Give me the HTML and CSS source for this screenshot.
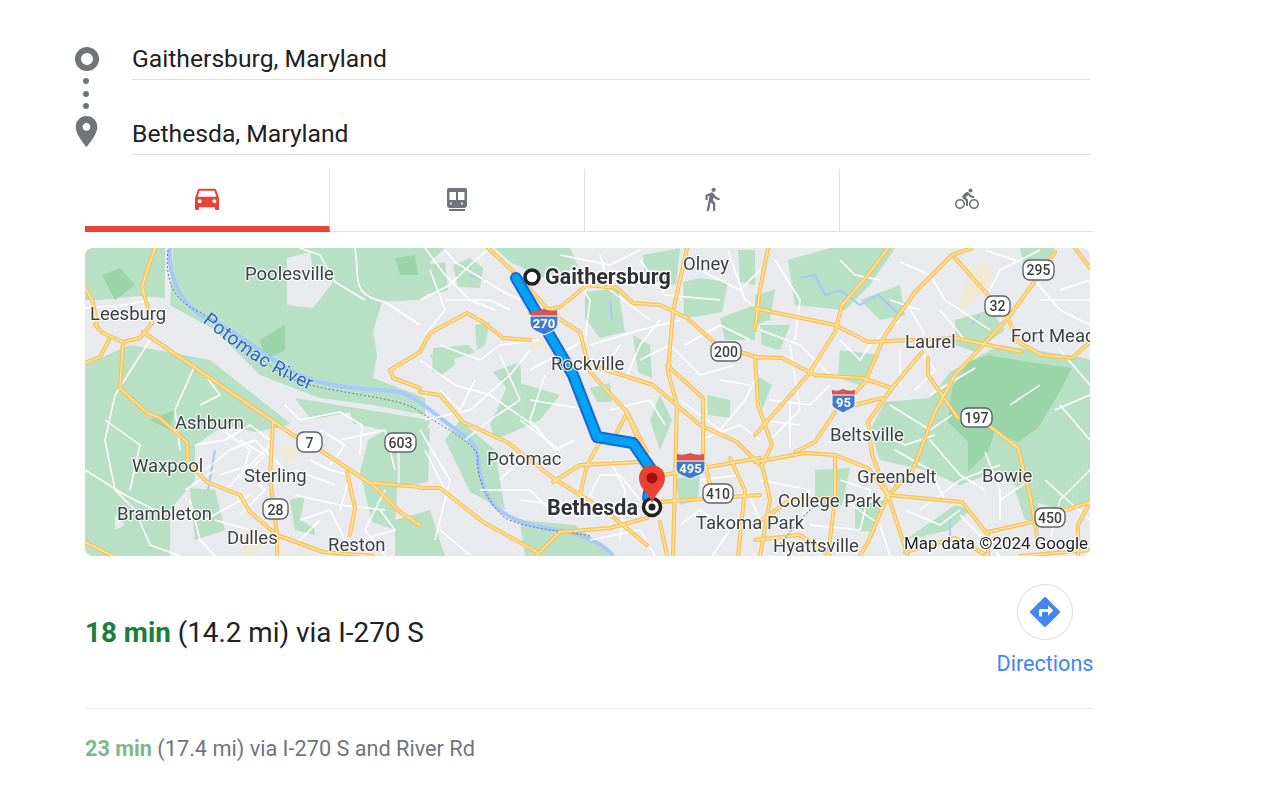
FILE: index.html
```html
<!DOCTYPE html>
<html lang="en">
<head>
<meta charset="utf-8">
<title>Directions</title>
<link rel="stylesheet" href="styles.css">
</head>
<body>
<main class="panel">
  <section class="trip">
    <div class="trip-icons">
      <span class="origin"></span>
      <span class="dots"><i></i><i></i><i></i></span>
      <svg class="dest" viewBox="0 0 24 24"><path d="M12 2C8.13 2 5 5.13 5 9c0 5.25 7 13 7 13s7-7.75 7-13c0-3.87-3.13-7-7-7zm0 9.5c-1.38 0-2.5-1.12-2.5-2.5s1.12-2.5 2.5-2.5 2.5 1.12 2.5 2.5-1.12 2.5-2.5 2.5z"/></svg>
    </div>
    <div class="fields">
      <div class="field">Gaithersburg, Maryland</div>
      <div class="field">Bethesda, Maryland</div>
    </div>
  </section>

  <nav class="tabs">
    <div class="tab tab-active"><svg class="ic-car" viewBox="0 0 24 24"><path d="M18.92 6.01C18.72 5.42 18.16 5 17.5 5h-11c-.66 0-1.21.42-1.42 1.01L3 12v8c0 .55.45 1 1 1h1c.55 0 1-.45 1-1v-1h12v1c0 .55.45 1 1 1h1c.55 0 1-.45 1-1v-8l-2.08-5.99zM6.5 16c-.83 0-1.5-.67-1.5-1.5S5.67 13 6.5 13s1.5.67 1.5 1.5S7.33 16 6.5 16zm11 0c-.83 0-1.5-.67-1.5-1.5s.67-1.5 1.5-1.5 1.5.67 1.5 1.5-.67 1.5-1.5 1.5zM5 11l1.5-4.5h11L19 11H5z"/></svg></div>
    <div class="tab"><svg class="ic-train" viewBox="0 0 20 23"><path fill-rule="evenodd" d="M2 0H18A2 2 0 0 1 20 2V17A3 3 0 0 1 17 20H3A3 3 0 0 1 0 17V2A2 2 0 0 1 2 0ZM2.5 4V12H9V4ZM11 4V12H17.5V4ZM4.5 14A1.5 1.5 0 1 0 4.501 17ZM15.5 14A1.5 1.5 0 1 0 15.501 17ZM2 21H18V23H2Z"/></svg></div>
    <div class="tab"><svg class="ic-walk" viewBox="0 0 24 24"><path d="M13.5 5.5c1.1 0 2-.9 2-2s-.9-2-2-2-2 .9-2 2 .9 2 2 2zM9.8 8.9L7 23h2.1l1.8-8 2.1 2v6h2v-7.5l-2.1-2 .6-3C14.8 12 16.8 13 19 13v-2c-1.9 0-3.5-1-4.3-2.4l-1-1.6c-.4-.6-1-1-1.7-1-.3 0-.5.1-.8.1L6 8.3V13h2V9.6l1.8-.7"/></svg></div>
    <div class="tab"><svg class="ic-bike" viewBox="0 0 24 24"><path d="M15.5 5.5c1.1 0 2-.9 2-2s-.9-2-2-2-2 .9-2 2 .9 2 2 2zM5 12c-2.8 0-5 2.2-5 5s2.2 5 5 5 5-2.2 5-5-2.2-5-5-5zm0 8.5c-1.9 0-3.5-1.6-3.5-3.5s1.6-3.5 3.5-3.5 3.5 1.6 3.5 3.5-1.6 3.5-3.5 3.5zm5.8-10l2.4-2.4.8.8c1.3 1.3 3 2.1 5.1 2.1V9c-1.5 0-2.7-.6-3.6-1.5l-1.9-1.9c-.5-.4-1-.6-1.6-.6s-1.1.2-1.4.6L7.8 8.4c-.4.4-.6.9-.6 1.4 0 .6.2 1.1.6 1.4L11 14v5h2v-6.2l-2.2-2.3zM19 12c-2.8 0-5 2.2-5 5s2.2 5 5 5 5-2.2 5-5-2.2-5-5-5zm0 8.5c-1.9 0-3.5-1.6-3.5-3.5s1.6-3.5 3.5-3.5 3.5 1.6 3.5 3.5-1.6 3.5-3.5 3.5z"/></svg></div>
  </nav>

  <svg class="map" viewBox="85 248 1005 308" role="img" aria-label="Map from Gaithersburg to Bethesda">
    <defs>
      <g id="highways">
        <path d="M155,248L148,268L142,287L148,308L152,323"/>
        <path d="M95,325L103,333L123,342L140,338L152,323"/>
        <path d="M85,287L93,302L97,325"/>
        <path d="M85,363L100,357L110,338"/>
        <path d="M143,332L293,435L323,452L373,485L400,512L420,525"/>
        <path d="M123,343L120,388L147,413L160,418L187,442L188,462L207,482L240,495L250,512L277,535L323,552L373,556"/>
        <path d="M273,422L270,478L277,535L277,556"/>
        <path d="M347,472L355,508L350,535"/>
        <path d="M373,483L420,487"/>
        <path d="M85,542L113,556"/>
        <path d="M420,352L390,370L393,378L420,388"/>
        <path d="M488,248L517,275L553,315L580,332L590,372L627,412L647,452"/>
        <path d="M530,313L560,307L587,285L617,288L633,303L660,305L687,318L717,345L760,358"/>
        <path d="M420,352L430,333L467,313L483,322L503,338L530,340"/>
        <path d="M687,248L673,312L668,372L677,405L673,556"/>
        <path d="M420,392L440,395L463,422L507,442L553,478L607,512L647,545"/>
        <path d="M600,368L653,385L700,425L737,442L760,465"/>
        <path d="M667,365L703,398L703,458L713,495"/>
        <path d="M553,482L580,465L640,462"/>
        <path d="M580,495L587,465L600,442"/>
        <path d="M617,432L627,413L640,445"/>
        <path d="M663,475L760,458"/>
        <path d="M420,488L440,488L483,522L537,552"/>
        <path d="M537,555L560,532L610,528L647,518"/>
        <path d="M660,502L760,495"/>
        <path d="M660,522L667,556"/>
        <path d="M888,248L868,275L842,305L835,332L808,375L755,435"/>
        <path d="M972,248L952,255L915,292L885,335L865,382L855,393"/>
        <path d="M955,258L988,295L1008,318"/>
        <path d="M1055,252L1032,285L1008,318L955,375L935,412L912,472L888,495L868,542L860,556"/>
        <path d="M1008,318L1018,342L1042,355L1072,358L1090,342"/>
        <path d="M755,308L772,312L835,325L868,342L955,338L1022,352"/>
        <path d="M755,357L782,358L815,375L862,378L892,388"/>
        <path d="M922,352L892,388L868,422L872,455L888,495"/>
        <path d="M835,412L815,442L795,452"/>
        <path d="M855,405L882,398"/>
        <path d="M755,462L805,453L835,455L868,468L888,495L902,538L908,556"/>
        <path d="M835,455L835,498L828,556"/>
        <path d="M888,495L962,502L988,535L988,556"/>
        <path d="M988,532L1032,522L1090,502"/>
        <path d="M988,425L1018,448L1030,495L1038,542"/>
        <path d="M928,358L928,375L942,395L958,418"/>
        <path d="M1075,248L1090,268"/>
        <path d="M755,525L790,500L835,498"/>
        <path d="M755,540L800,535L830,556"/>
        <path d="M905,552L955,538L988,556"/>
        <path d="M1078,556L1078,525L1090,502"/>
        <path d="M1020,556L1090,550"/>
        <path d="M768,248L760,290L755,330"/>
        <path d="M762,465L770,500L760,556"/>
        <path d="M730,458L745,490L738,556"/>
        <path d="M755,357L758,405L772,445L762,465"/>
        <path d="M640,462L648,475"/>
      </g>
    </defs>

    <rect class="m-land" x="85" y="248" width="1005" height="308"/>

    <g class="m-green">
      <path d="M173,248H445L430,262L440,285L420,300L382,302L373,332L377,355L373,378L425,398V415L373,405L320,398L260,375L215,330L170,305Z"/>
      <path d="M85,248H165V298L140,296L100,300L85,300Z"/>
      <path d="M85,365L130,345L210,360L292,425L255,432L225,425L195,445L195,480L170,510L170,556H85Z"/>
      <path d="M295,398L430,420L425,440L340,420L310,418Z"/>
      <path d="M368,440L395,425L398,470L395,530L372,522L360,472Z"/>
      <path d="M415,430L430,428L428,482L400,486L400,440Z"/>
      <path d="M395,520L430,510L445,556H395Z"/>
      <path d="M290,500L310,495L315,535L295,530Z"/>
      <path d="M190,488L215,490L225,530L195,540Z"/>
      <path d="M453,265L470,258L483,268L480,288L458,287Z"/>
      <path d="M430,355L453,350L455,365L440,376Z"/>
      <path d="M433,348L468,345L475,352L452,360L444,372L432,372Z"/>
      <path d="M475,325L490,322L485,345L477,350Z"/>
      <path d="M493,372L520,362L522,395L510,392Z"/>
      <path d="M590,388L610,383L612,402L597,402Z"/>
      <path d="M683,282L700,278L728,282L722,312L700,316L684,318Z"/>
      <path d="M585,292L618,288L625,332L600,338L585,318Z"/>
      <path d="M720,318L755,305L755,340L725,340Z"/>
      <path d="M707,395L730,400L730,418L708,415Z"/>
      <path d="M495,248L570,248L585,282L560,285L510,262Z"/>
      <path d="M425,265L445,262L448,290L430,295Z"/>
      <path d="M510,380L560,395L540,420L495,440L490,425Z"/>
      <path d="M633,335L650,345L652,378L638,372Z"/>
      <path d="M643,255L680,248L676,285L645,280Z"/>
      <path d="M738,250L755,250L755,285L740,282Z"/>
      <path d="M760,325L790,325L780,350L762,345Z"/>
      <path d="M460,420L495,450L505,510L470,492L445,440Z"/>
      <path d="M520,520L575,525L610,552V556H525Z"/>
      <path d="M788,260L830,248H895L870,285L845,310L795,305Z"/>
      <path d="M755,295L775,290L770,320L755,325Z"/>
      <path d="M860,300L900,285L905,315L880,320Z"/>
      <path d="M1085,358L1090,360V500L1060,510L1030,500L1000,470L960,485L925,470L880,460L870,430L885,402L930,398L950,372L1000,345Z"/>
      <path d="M1020,248H1055L1040,270L1025,270Z"/>
      <path d="M955,320L990,310L1005,330L975,352L955,345Z"/>
      <path d="M815,470L850,468L842,505L815,508Z"/>
      <path d="M855,505L885,500L870,532L855,530Z"/>
      <path d="M905,540L955,505L970,510L950,530Z"/>
      <path d="M1015,490L1035,485L1040,520L1025,520Z"/>
      <path d="M660,395L672,420L660,450L650,420Z"/>
      <path d="M675,480L700,470L698,500L680,505Z"/>
      <path d="M840,350L880,355L860,385L838,378Z"/>
      <path d="M755,375L772,385L762,410Z"/>
    </g>
    <g class="m-forest">
      <path d="M952,388L968,362L988,355L1028,362L1072,368L1058,395L1038,428L1018,442L995,432L988,452L968,472L968,442L948,422Z"/>
      <path d="M102,275L120,268L135,285L115,300Z"/>
      <path d="M260,340L285,325L285,350L265,360Z"/>
      <path d="M395,258L415,255L418,275L400,275Z"/>
      <path d="M150,420L175,410L170,430Z"/>
    </g>

    <g class="m-land-patch">
      <path d="M287,258L310,252L313,268L333,282L313,308L287,305Z"/>
      <path d="M382,302L420,300V355L380,340Z"/>
      <path d="M120,300L170,305L180,325L150,340L100,330Z"/>
      <path d="M205,445L232,428L290,440L270,520L230,500L205,470Z"/>
      <path d="M285,425L350,412L360,450L310,470Z"/>
      <path d="M310,470L360,480L345,545L300,520Z"/>
      <path d="M115,515L125,525L115,530Z"/>
    </g>

    <g class="m-sand">
      <path d="M280,448L292,445L296,458L285,464Z"/>
      <path d="M240,532L258,528L262,550L245,556Z"/>
      <path d="M970,270L985,262L995,272L975,300L958,312Z"/>
      <path d="M528,340L540,335L545,345L532,350Z"/>
    </g>

    <g class="m-water">
      <path d="M170,248C168,270 175,300 205,318C240,330 265,360 300,375C340,392 380,388 400,392C420,398 440,420 470,440C482,452 475,475 490,500C505,522 540,528 570,532C590,538 605,545 613,556"/>
    </g>
    <g class="m-water-thin">
      <path d="M800,278L815,275L825,295L840,290L860,305L878,295L900,315"/>
      <path d="M215,450L208,490"/>
      <path d="M980,315L972,325"/>
      <path d="M950,520V540"/>
      <path d="M610,300L612,320"/>
      <path d="M470,275L485,280"/>
    </g>
    <path class="m-border" d="M168,250C165,275 170,300 200,312C240,335 262,368 300,382C340,395 400,396 420,412C440,425 470,440 478,455C475,480 490,505 505,518C530,530 560,530 590,536"/>

    <g class="m-white">
      <path d="M355,248C360,280 350,295 385,302L420,325"/>
      <path d="M300,248L320,255L335,282L365,300"/>
      <path d="M85,308L125,305L150,300"/>
      <path d="M150,340L115,395L105,440L115,490L135,510L150,545L180,556"/>
      <path d="M195,365L175,410L180,450"/>
      <path d="M85,470L125,495L155,510L205,520L250,495"/>
      <path d="M205,470L230,450L255,440L285,470"/>
      <path d="M195,445L225,440L250,425L270,440"/>
      <path d="M200,405L220,395L205,375"/>
      <path d="M190,500L200,540L215,556"/>
      <path d="M285,405L300,420L340,412L362,425L360,455"/>
      <path d="M310,460L330,470L350,475L340,510"/>
      <path d="M295,495L340,505L385,510"/>
      <path d="M220,475L250,465L270,445"/>
      <path d="M300,520L330,510L345,540"/>
      <path d="M215,425L250,450L240,480"/>
      <path d="M380,510L395,530L360,540"/>
      <path d="M420,300L450,285L470,265L490,248"/>
      <path d="M425,248L445,275L470,300L495,310"/>
      <path d="M420,430L450,480L435,540"/>
      <path d="M500,355L520,400L490,420L465,440"/>
      <path d="M420,360L455,385L490,395L540,430"/>
      <path d="M570,270L590,300L585,340L530,370"/>
      <path d="M590,345L640,330L680,320"/>
      <path d="M520,420L560,450"/>
      <path d="M625,380L640,345L660,320"/>
      <path d="M680,400L720,430L745,400L760,370"/>
      <path d="M728,250L745,300L760,310"/>
      <path d="M700,270L740,290L760,270"/>
      <path d="M480,490L530,490L560,520"/>
      <path d="M610,460L625,490L620,540"/>
      <path d="M700,480L740,475L760,520"/>
      <path d="M775,260L800,300L795,340"/>
      <path d="M790,345L800,410L770,440"/>
      <path d="M840,340L860,360L870,345L900,320"/>
      <path d="M905,300L925,335"/>
      <path d="M930,395L975,368"/>
      <path d="M890,405L930,430L952,415"/>
      <path d="M930,440L960,475L985,490"/>
      <path d="M900,350L900,385"/>
      <path d="M985,452L1000,490L1000,520"/>
      <path d="M920,510L960,480L1000,465"/>
      <path d="M1060,405L1090,440"/>
      <path d="M1030,275L1060,310L1090,325"/>
      <path d="M1060,350L1090,385"/>
      <path d="M1050,540L1060,500L1090,470"/>
      <path d="M790,400L790,448"/>
      <path d="M760,480L810,490L800,530"/>
      <path d="M845,500L880,525L890,556"/>
      <path d="M430,270L445,310L425,335"/>
      <path d="M445,250L455,262L500,290L520,300"/>
      <path d="M440,345L480,360L500,345L540,340"/>
      <path d="M425,420L470,410L510,375L530,350"/>
      <path d="M445,300L490,300L510,310"/>
      <path d="M475,380L460,410L440,390"/>
      <path d="M545,375L530,420L555,450L575,440"/>
      <path d="M530,400L590,410"/>
      <path d="M560,255L610,265L640,250"/>
      <path d="M600,255L610,290L650,320"/>
      <path d="M640,260L665,295L720,300"/>
      <path d="M620,345L600,375"/>
      <path d="M640,360L670,345L700,375L735,365"/>
      <path d="M610,410L650,400L665,425"/>
      <path d="M500,480L520,460L555,465"/>
      <path d="M520,500L560,505"/>
      <path d="M440,530L470,555"/>
      <path d="M425,450L445,490"/>
      <path d="M585,505L600,475L620,475L640,500"/>
      <path d="M590,540L640,530L655,556"/>
      <path d="M680,525L700,510L730,530L712,556"/>
      <path d="M700,440L740,425L760,440"/>
      <path d="M720,380L750,385"/>
      <path d="M685,345L720,325L750,340"/>
      <path d="M760,330L800,345L830,375"/>
      <path d="M770,400L810,405L830,385"/>
      <path d="M840,260L855,275L880,280"/>
      <path d="M900,262L930,275L945,300L990,330"/>
      <path d="M890,300L920,310"/>
      <path d="M940,310L965,340"/>
      <path d="M985,250L1020,262"/>
      <path d="M1060,290L1090,280"/>
      <path d="M860,425L905,445L935,435"/>
      <path d="M895,450L930,470L945,500"/>
      <path d="M840,480L870,490L860,530"/>
      <path d="M905,510L940,525L960,510"/>
      <path d="M1000,500L1030,480"/>
      <path d="M1010,405L1040,385"/>
      <path d="M760,420L800,425"/>
      <path d="M915,390L935,370L920,350"/>
      <path d="M985,300L1000,270L1040,250"/>
      <path d="M1040,300L1090,300"/>
      <path d="M1055,410L1090,395"/>
      <path d="M1045,480L1090,520"/>
      <path d="M960,515L1000,556"/>
      <path d="M810,525L860,530"/>
      <path d="M340,440L385,430L395,470"/>
      <path d="M385,490L365,530L385,556"/>
      <path d="M295,470L335,485"/>
      <path d="M225,490L245,470L265,490L240,515"/>
      <path d="M185,490L215,470"/>
      <path d="M240,440L265,455L245,475"/>
      <path d="M215,520L250,530"/>
      <path d="M295,545L320,520"/>
      <path d="M320,430L345,445L330,465"/>
      <path d="M105,420L140,445L130,490"/>
    </g>

    <use href="#highways" class="m-road-out"/>
    <use href="#highways" class="m-road-in"/>

    <g class="m-dotted"><path d="M775,550L800,520L815,505"/></g>

    <path class="m-route-out" d="M516,278L573,375L597,437L633,443L653,472L648,498"/>
    <path class="m-route-in" d="M516,278L573,375L597,437L633,443L653,472L648,498"/>

    <g class="m-shield">
      <g>
        <path class="s-red" d="M531,310Q537,312 544,309Q551,312 557,310V316H531Z"/>
        <path class="s-blue" d="M530,316H558V323C558,330 550,332 544,335C538,332 530,330 530,323Z"/>
        <text class="s-num" x="544" y="328">270</text>
      </g>
      <g>
        <path class="s-red" d="M677,454Q684,456 690,453Q697,456 704,454V461H677Z"/>
        <path class="s-blue" d="M676,461H705V468C705,475 696,476 690,479C684,476 676,475 676,468Z"/>
        <text class="s-num" x="690.5" y="473">495</text>
      </g>
      <g>
        <path class="s-red" d="M832,390Q838,392 843,389Q849,392 855,390V395H832Z"/>
        <path class="s-blue" d="M832,395H855V405C855,408 848,410 843,413C838,410 832,408 832,405Z"/>
        <text class="s-num" x="843.5" y="407">95</text>
      </g>
    </g>

    <g class="m-round">
      <rect x="297" y="432" width="25" height="20" rx="7"/><text x="309.5" y="447.5">7</text>
      <rect x="385" y="433" width="31" height="19" rx="7"/><text x="400.5" y="447.5">603</text>
      <rect x="263" y="499" width="25" height="20" rx="7"/><text x="275.5" y="514.5">28</text>
      <rect x="711" y="342" width="30" height="19" rx="7"/><text x="726" y="356.5">200</text>
      <rect x="703" y="484" width="30" height="19" rx="7"/><text x="718" y="498.5">410</text>
      <rect x="1023" y="260" width="31" height="20" rx="7"/><text x="1038.5" y="275">295</text>
      <rect x="985" y="296" width="25" height="20" rx="7"/><text x="997.5" y="311">32</text>
      <rect x="961" y="408" width="31" height="19" rx="7"/><text x="976.5" y="422.5">197</text>
      <rect x="1035" y="508" width="30" height="19" rx="7"/><text x="1050" y="522.5">450</text>
    </g>

    <g class="m-label">
      <text x="245" y="280">Poolesville</text>
      <text x="90" y="320">Leesburg</text>
      <text x="175" y="429">Ashburn</text>
      <text x="132" y="472">Waxpool</text>
      <text x="244" y="482">Sterling</text>
      <text x="117" y="520">Brambleton</text>
      <text x="227" y="544">Dulles</text>
      <text x="328" y="551">Reston</text>
      <text x="683" y="270">Olney</text>
      <text x="551" y="370">Rockville</text>
      <text x="487" y="465">Potomac</text>
      <text x="696" y="529">Takoma Park</text>
      <text x="773" y="552">Hyattsville</text>
      <text x="778" y="507">College Park</text>
      <text x="857" y="483">Greenbelt</text>
      <text x="982" y="482">Bowie</text>
      <text x="830" y="441">Beltsville</text>
      <text x="905" y="348">Laurel</text>
      <text x="1011" y="342">Fort Meade</text>
    </g>
    <g class="m-label-bold">
      <text x="545" y="284">Gaithersburg</text>
      <text x="547" y="515">Bethesda</text>
    </g>
    <path id="river-line" class="m-none" d="M202,322C232,345 262,372 320,394"/>
    <text class="m-river"><textPath href="#river-line">Potomac River</textPath></text>
    <text class="m-credit" x="904" y="549">Map data ©2024 Google</text>

    <circle class="m-start" cx="532" cy="277" r="7"/>
    <circle class="m-end" cx="652" cy="507" r="8.5"/>
    <circle class="m-end-dot" cx="652" cy="507" r="3.5"/>
    <path class="m-pin" d="M652,503C648,492 639,488 639,478A13,13 0 0 1 665,478C665,488 656,492 652,503Z"/>
    <circle class="m-pin-dot" cx="652" cy="478" r="5.5"/>
  </svg>

  <section class="route">
    <p class="route-main"><strong>18 min</strong> (14.2 mi) via I-270 S</p>
    <div class="directions">
      <span class="dir-circle"><svg viewBox="0 0 24 24"><path d="M21.71 11.29l-9-9c-.39-.39-1.02-.39-1.41 0l-9 9c-.39.39-.39 1.02 0 1.41l9 9c.39.39 1.02.39 1.41 0l9-9c.39-.38.39-1.01 0-1.41zM14 14.5V12h-4v3H8v-4c0-.55.45-1 1-1h5V7.5l3.5 3.5-3.5 3.5z"/></svg></span>
      <span class="dir-label">Directions</span>
    </div>
  </section>

  <p class="route-alt"><strong>23 min</strong> (17.4 mi) via I-270 S and River Rd</p>
</main>
</body>
</html>
```
FILE: styles.css
```css
html, body { margin: 0; padding: 0; background: #fff; }
body { font-family: Roboto, "Liberation Sans", sans-serif; overflow: hidden; height: 787px; }
.panel { width: 1008px; margin-left: 85px; padding-top: 41px; }

.trip { display: flex; margin-left: -10px; width: 1015px; }
.trip-icons { width: 24px; margin-right: 33px; padding-top: 6px; display: flex; flex-direction: column; align-items: center; }
.origin { box-sizing: border-box; width: 24px; height: 24px; border: 6px solid #70757a; border-radius: 50%; }
.dots { display: flex; flex-direction: column; gap: 6.5px; margin: 7px 2px 0 0; }
.dots i { display: block; width: 6px; height: 6px; border-radius: 50%; background: #70757a; }
.dest { width: 37px; height: 37px; margin: 4px 1px 0 0; fill: #70757a; }
.fields { flex: 1; display: flex; flex-direction: column; gap: 36px; }
.field { height: 38px; line-height: 36px; font-size: 24.7px; color: #202124; border-bottom: 1px solid #dadce0; }

.tabs { display: grid; grid-template-columns: 245px 255px 255px 253px; height: 62px; margin-top: 14px; border-bottom: 1px solid #e0e0e0; }
.tab { display: flex; align-items: center; justify-content: center; border-right: 1px solid #e0e0e0; fill: #70757a; box-sizing: border-box; }
.tab:last-child { border-right: 0; }
.tab-active { fill: #ea4335; border-bottom: 6px solid #ea4335; margin-bottom: -1px; }
.ic-car { width: 32px; height: 32px; }
.ic-train { width: 20px; height: 23px; margin-top: -2px; }
.ic-walk { width: 26px; height: 26px; margin-top: -2px; }
.ic-bike { width: 24px; height: 24px; margin-top: -2px; }

.map { display: block; width: 1005px; height: 308px; margin-top: 16px; border-radius: 8px; filter: blur(0.3px); }
.m-land, .m-land-patch { fill: #e8eaed; }
.m-green { fill: #b8e0c4; }
.m-forest { fill: #99d5a9; }
.m-sand { fill: #f1e9d4; }
.m-water { fill: none; stroke: #a6c8fa; stroke-width: 4; }
.m-water-thin { fill: none; stroke: #a6c8fa; stroke-width: 2; }
.m-border { fill: none; stroke: #6f7a86; stroke-width: 1; stroke-dasharray: 2 2; }
.m-dotted { fill: none; stroke: #9aa0a6; stroke-width: 1.4; stroke-dasharray: 2 2; }
.m-white { fill: none; stroke: #fff; stroke-width: 1.5; stroke-linejoin: round; }
.m-road-out { fill: none; stroke: #fbc04f; stroke-width: 4; stroke-linejoin: round; stroke-linecap: round; }
.m-road-in { fill: none; stroke: #fee3a4; stroke-width: 1.6; stroke-linejoin: round; stroke-linecap: round; }
.m-route-out { fill: none; stroke: #1a66d2; stroke-width: 12; stroke-linejoin: round; stroke-linecap: round; }
.m-route-in { fill: none; stroke: #00a2f5; stroke-width: 8; stroke-linejoin: round; stroke-linecap: round; }
.s-red { fill: #d9534f; }
.s-blue { fill: #3f7ccf; stroke: #fff; stroke-width: 1; }
.s-num { fill: #fff; font-size: 13px; font-weight: 700; text-anchor: middle; }
.m-round rect { fill: #fff; stroke: #5f6368; stroke-width: 1.4; }
.m-round text { fill: #3c4043; font-size: 14px; font-weight: 500; text-anchor: middle; }
.m-label text { fill: #3c4043; font-size: 18.5px; stroke: rgba(255,255,255,.8); stroke-width: 2.5px; paint-order: stroke; stroke-linejoin: round; }
.m-label-bold text { fill: #303134; font-size: 21.5px; font-weight: 700; stroke: #fff; stroke-width: 3px; paint-order: stroke; stroke-linejoin: round; }
.m-none { fill: none; stroke: none; }
.m-river { fill: #2a62c7; font-size: 19px; letter-spacing: .4px; stroke: rgba(255,255,255,.5); stroke-width: 1.5px; paint-order: stroke; }
.m-credit { fill: #202124; font-size: 16.9px; stroke: #fff; stroke-width: 2.5px; paint-order: stroke; stroke-linejoin: round; }
.m-start { fill: #fff; stroke: #202124; stroke-width: 3.5; }
.m-end { fill: #fff; stroke: #202124; stroke-width: 3.5; }
.m-end-dot { fill: #202124; }
.m-pin { fill: #ea4335; }
.m-pin-dot { fill: #a50e0e; }

.route { display: flex; justify-content: space-between; align-items: flex-start; height: 124px; margin-top: 28px; border-bottom: 1px solid #ebebeb; }
.route-main { margin: 33px 0 0; font-size: 27.8px; line-height: 32px; color: #202124; }
.route-main strong { color: #188038; font-weight: 700; }
.directions { display: flex; flex-direction: column; align-items: center; width: 96px; }
.dir-circle { box-sizing: border-box; width: 56px; height: 56px; border: 1px solid #dadce0; border-radius: 50%; display: flex; align-items: center; justify-content: center; fill: #4285f4; }
.dir-circle svg { width: 36px; height: 36px; }
.dir-label { margin-top: 10px; font-size: 21.6px; line-height: 28px; color: #4285f4; white-space: nowrap; }
.route-alt { margin: 26px 0 0; font-size: 21.7px; line-height: 28px; color: #70757a; }
.route-alt strong { color: #7cb98c; font-weight: 700; }
```
